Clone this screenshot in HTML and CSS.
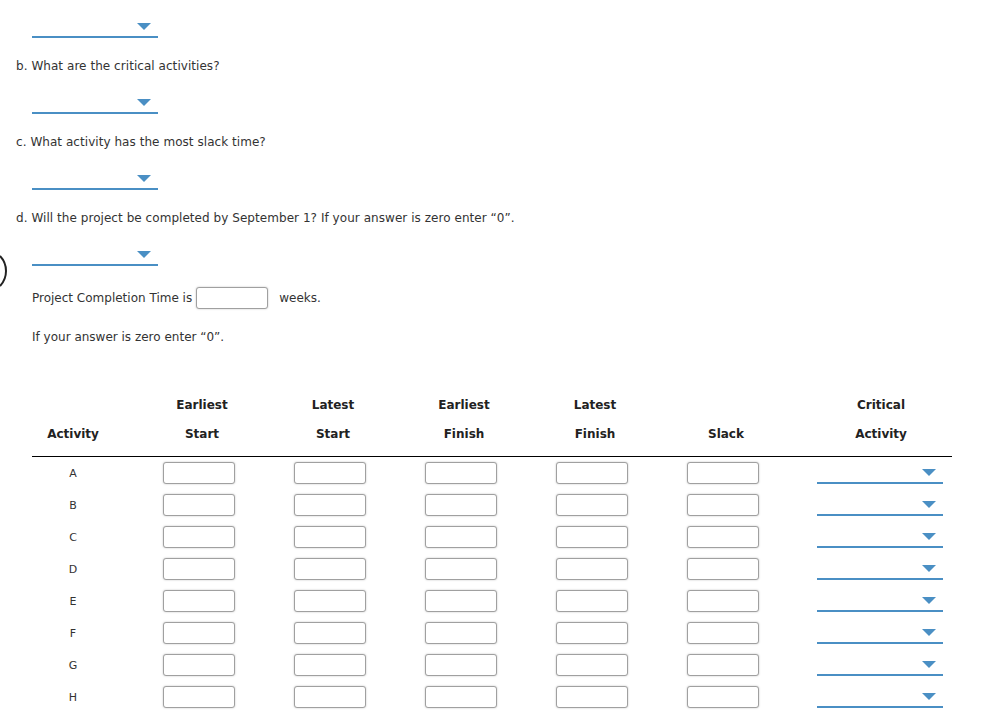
FILE: index.html
```html
<!DOCTYPE html>
<html lang="en">
<head>
    <meta charset="UTF-8">
    <title>Project Scheduling</title>
    <link rel="stylesheet" href="styles.css">
</head>
<body>
    <svg class="edge-mark" width="10" height="34" viewBox="0 0 10 34">
        <path d="M0 2 A 21.75 21.75 0 0 1 0 32" fill="none" stroke="#222" stroke-width="2"/>
    </svg>

    <div class="question">
        <div class="dropdown"><span class="arrow"></span></div>

        <p class="prompt">b. What are the critical activities?</p>
        <div class="dropdown"><span class="arrow"></span></div>

        <p class="prompt">c. What activity has the most slack time?</p>
        <div class="dropdown"><span class="arrow"></span></div>

        <p class="prompt">d. Will the project be completed by September 1? If your answer is zero enter “0”.</p>
        <div class="dropdown"><span class="arrow"></span></div>

        <div class="completion">
            Project Completion Time is <input type="text" class="box"> <span class="unit">weeks.</span>
        </div>
        <p class="note">If your answer is zero enter “0”.</p>
    </div>

    <div class="schedule schedule-head">
        <div class="head first"><span>Activity</span></div>
        <div class="head"><span>Earliest<br>Start</span></div>
        <div class="head"><span>Latest<br>Start</span></div>
        <div class="head"><span>Earliest<br>Finish</span></div>
        <div class="head"><span>Latest<br>Finish</span></div>
        <div class="head"><span>Slack</span></div>
        <div class="head last"><span>Critical<br>Activity</span></div>
    </div>
    <div class="schedule rows" id="rows"></div>

    <script>
        const activities = ['A', 'B', 'C', 'D', 'E', 'F', 'G', 'H'];
        const rows = document.getElementById('rows');

        activities.forEach(function(name) {
            let html = '<div class="cell first">' + name + '</div>';
            for (let i = 0; i < 5; i++) {
                html += '<div class="cell"><input type="text" class="box"></div>';
            }
            html += '<div class="cell last"><div class="dropdown"><span class="arrow"></span></div></div>';
            rows.insertAdjacentHTML('beforeend', html);
        });
    </script>
</body>
</html>
```

FILE: styles.css
```css
body {
    margin: 0;
    padding: 16px 0 0 0;
    font-family: "DejaVu Sans", Verdana, sans-serif;
    font-size: 12px;
    color: #333;
    background-color: #fff;
    position: relative;
}

.edge-mark {
    position: absolute;
    left: 0;
    top: 254px;
}

.question {
    padding-left: 16px;
}

.prompt {
    margin: 20px 0 18px 0;
    line-height: 16px;
    letter-spacing: 0.05px;
}

.dropdown {
    position: relative;
    width: 126px;
    height: 20px;
    border-bottom: 2px solid #4a8fc4;
}

.question .dropdown {
    margin-left: 16px;
}

.arrow {
    position: absolute;
    right: 7px;
    top: 7px;
    width: 0;
    height: 0;
    border-left: 7px solid transparent;
    border-right: 7px solid transparent;
    border-top: 7px solid #4a8fc4;
}

.completion {
    margin: 20px 0 0 16px;
    display: flex;
    align-items: center;
    height: 24px;
}

.box {
    width: 72px;
    height: 22px;
    box-sizing: border-box;
    border: 1px solid #a0a0a0;
    border-radius: 3px;
    box-shadow: 0 0 2px rgba(0, 0, 0, 0.25);
    margin: 0;
    padding: 0;
    background: #fff;
}

.completion .box {
    margin-left: 4px;
}

.unit {
    margin-left: 11px;
}

.note {
    margin: 19px 0 0 16px;
    line-height: 16px;
}

.schedule {
    display: grid;
    grid-template-columns: 82px repeat(5, 131px) 1fr;
    width: 920px;
    margin-left: 32px;
}

.schedule-head {
    margin-top: 46px;
}

.head {
    display: flex;
    justify-content: flex-end;
    align-items: flex-end;
    padding: 0 4px 7px 0;
    border-bottom: 1px solid #000;
    font-weight: bold;
    color: #222;
    line-height: 29px;
}

.head span {
    width: 78px;
    text-align: center;
}

.head.first,
.cell.first {
    justify-content: center;
    padding-right: 0;
}

.head.last {
    padding-right: 8px;
}

.head.last span {
    width: 126px;
}

.cell {
    height: 32px;
    display: flex;
    align-items: center;
    justify-content: flex-end;
    padding-right: 10px;
}

.cell.first {
    font-size: 11px;
}

.cell.last {
    padding-right: 9px;
}
```
